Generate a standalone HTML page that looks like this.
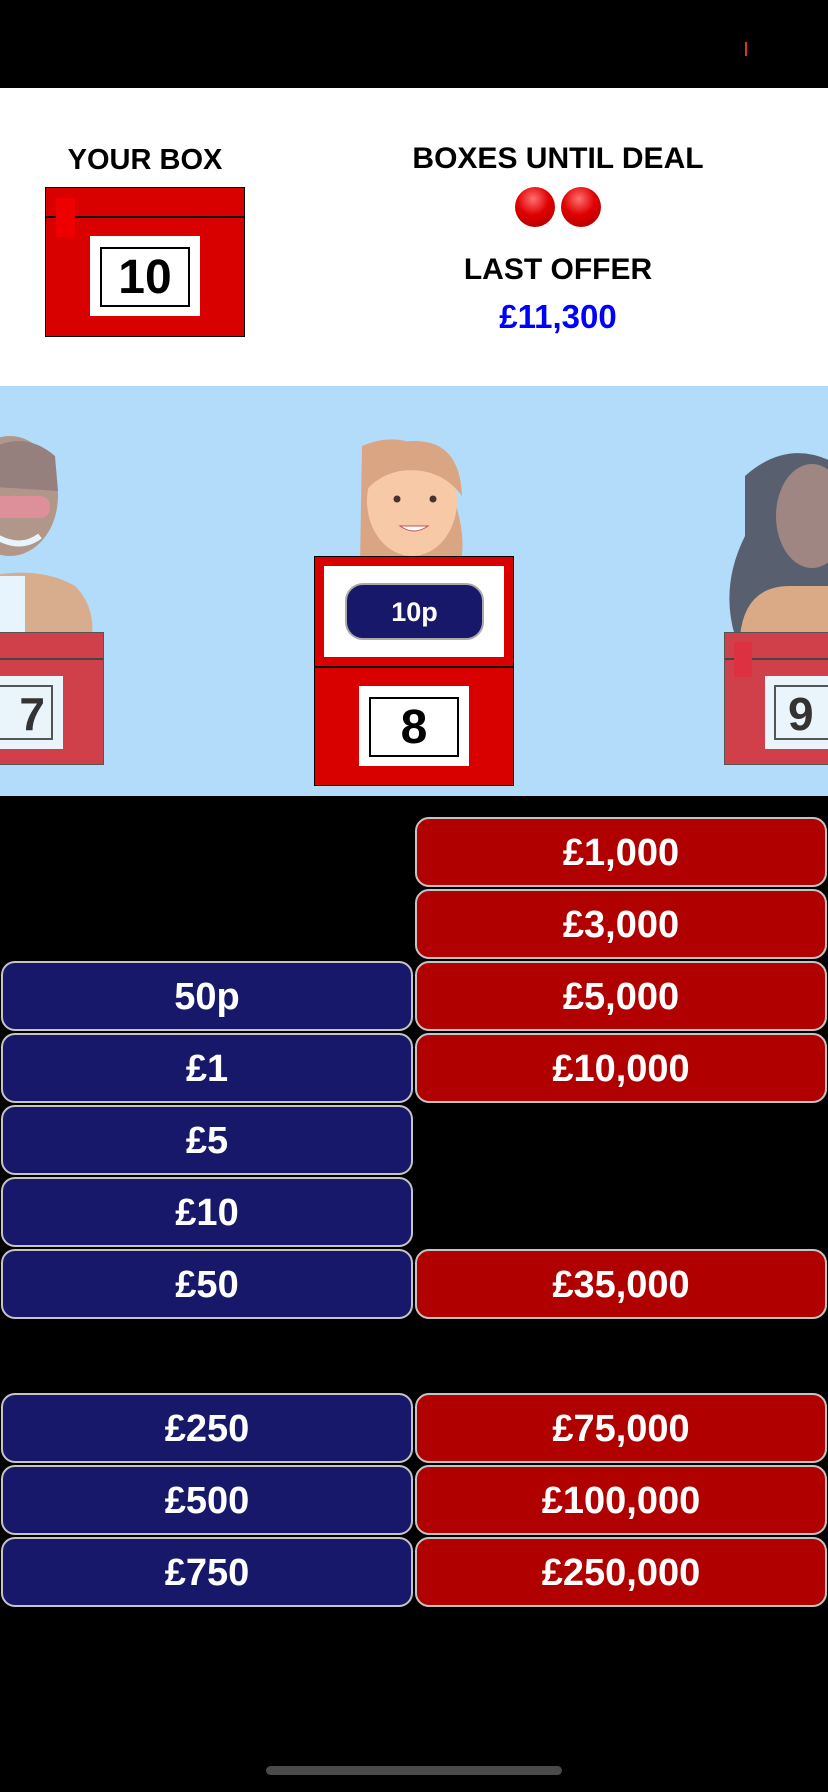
<!DOCTYPE html>
<html><head><meta charset="utf-8"><style>
*{margin:0;padding:0;box-sizing:border-box}
body{width:828px;height:1792px;background:#000;position:relative;overflow:hidden;font-family:"Liberation Sans",sans-serif;font-weight:bold}
.a{position:absolute}
.btn{position:absolute;height:70px;border:2px solid #c4c4c4;border-radius:14px;color:#fff;font-size:38px;text-align:center;line-height:68px}
.n{background:#18186b;left:1px;width:412px}
.r{background:#b00000;left:415px;width:412px}
</style></head><body>
<div class="a" style="left:745px;top:42px;width:2px;height:14px;background:#e03030"></div>
<div class="a" style="left:0;top:88px;width:828px;height:298px;background:#fff">
  <div class="a" style="left:45px;width:200px;top:56px;text-align:center;font-size:29px;color:#000">YOUR BOX</div>
  <div class="a" style="left:45px;top:99px;width:200px;height:150px;background:#d90000;border:1px solid #000">
    <div class="a" style="left:0;top:28px;width:198px;height:2px;background:#111"></div>
    <div class="a" style="left:10px;top:10px;width:19px;height:39px;background:#ee0000"></div>
    <div class="a" style="left:44px;top:48px;width:110px;height:80px;background:#fff">
      <div class="a" style="left:10px;top:11px;width:90px;height:60px;border:2px solid #000;text-align:center;font-size:48px;line-height:58px;color:#000">10</div>
    </div>
  </div>
  <div class="a" style="left:358px;width:400px;top:54px;text-align:center;font-size:30px;color:#000">BOXES UNTIL DEAL</div>
  <div class="a" style="left:515px;top:99px;width:40px;height:40px;border-radius:50%;background:radial-gradient(circle at 45% 30%,#ff7070,#e00000 45%,#a00000)"></div>
  <div class="a" style="left:561px;top:99px;width:40px;height:40px;border-radius:50%;background:radial-gradient(circle at 45% 30%,#ff7070,#e00000 45%,#a00000)"></div>
  <div class="a" style="left:358px;width:400px;top:165px;text-align:center;font-size:30px;color:#000">LAST OFFER</div>
  <div class="a" style="left:358px;width:400px;top:210px;text-align:center;font-size:33px;color:#0000ff">£11,300</div>
</div>
<div class="a" style="left:0;top:386px;width:828px;height:410px;background:#b3dcfb;overflow:hidden">
  <svg class="a" style="left:0;top:0" width="828" height="410">
    <g opacity="0.7">
      <path d="M-10 250 L-10 190 Q40 180 75 200 Q95 220 92 250Z" fill="#e89a60"/>
      <rect x="-5" y="190" width="30" height="60" fill="#fff"/>
      <ellipse cx="10" cy="110" rx="48" ry="60" fill="#b07a5a"/>
      <path d="M-20 70 Q20 40 55 70 L58 105 L-20 100Z" fill="#8a5a4a"/>
      <rect x="-10" y="110" width="60" height="22" rx="10" fill="#f07070"/>
      <path d="M-5 150 Q20 165 40 150" stroke="#fff" stroke-width="6" fill="none"/>
    </g>
    <path d="M362 60 Q410 40 440 80 Q470 140 460 180 L360 180 Z" fill="#d9a582"/>
    <ellipse cx="412" cy="115" rx="45" ry="55" fill="#f7c9a6"/>
    <path d="M362 110 Q365 55 415 55 Q460 55 462 110 Q440 80 400 85 Q375 90 362 110Z" fill="#d9a582"/>
    <circle cx="397" cy="113" r="3.5" fill="#4a3030"/><circle cx="433" cy="113" r="3.5" fill="#4a3030"/>
    <path d="M400 140 Q414 150 428 140 Z" fill="#fff" stroke="#c05050"/>
    <g opacity="0.75">
      <path d="M745 90 Q790 50 840 80 L840 250 L735 250 Q720 200 745 150Z" fill="#3a3640"/>
      <ellipse cx="812" cy="130" rx="36" ry="52" fill="#9a6a5a"/>
      <path d="M740 250 Q745 200 790 200 L840 200 L840 250Z" fill="#e89a60"/>
    </g>
  </svg>
  <div class="a" style="left:-2px;top:246px;width:106px;height:133px;background:#d0404a;border:1px solid #555">
    <div class="a" style="left:0;top:25px;width:104px;height:2px;background:#444"></div>
    <div class="a" style="left:-2px;top:43px;width:66px;height:73px;background:#eaf4fb">
      <div class="a" style="left:-4px;top:9px;width:60px;height:55px;border:2px solid #555;font-size:46px;line-height:54px;color:#333;text-align:right;padding-right:6px">7</div>
    </div>
  </div>
  <div class="a" style="left:724px;top:246px;width:110px;height:133px;background:#d0404a;border:1px solid #555">
    <div class="a" style="left:0;top:25px;width:110px;height:2px;background:#444"></div>
    <div class="a" style="left:9px;top:9px;width:18px;height:35px;background:#dd3040"></div>
    <div class="a" style="left:40px;top:43px;width:70px;height:73px;background:#eaf4fb">
      <div class="a" style="left:9px;top:9px;width:70px;height:55px;border:2px solid #555;font-size:46px;line-height:54px;color:#333;padding-left:12px">9</div>
    </div>
  </div>
  <div class="a" style="left:314px;top:170px;width:200px;height:230px;background:#d90000;border:1px solid #000">
    <div class="a" style="left:9px;top:9px;width:180px;height:91px;background:#fff">
      <div class="a" style="left:21px;top:17px;width:139px;height:57px;background:#18186b;border:2px solid #aaa;border-radius:18px;color:#fff;font-size:27px;text-align:center;line-height:55px">10p</div>
    </div>
    <div class="a" style="left:0;top:109px;width:198px;height:2px;background:#111"></div>
    <div class="a" style="left:44px;top:129px;width:110px;height:80px;background:#fff">
      <div class="a" style="left:10px;top:11px;width:90px;height:60px;border:2px solid #000;text-align:center;font-size:48px;line-height:58px;color:#000">8</div>
    </div>
  </div>
</div>
<div class="btn r" style="top:817px">£1,000</div>
<div class="btn r" style="top:889px">£3,000</div>
<div class="btn n" style="top:961px">50p</div><div class="btn r" style="top:961px">£5,000</div>
<div class="btn n" style="top:1033px">£1</div><div class="btn r" style="top:1033px">£10,000</div>
<div class="btn n" style="top:1105px">£5</div>
<div class="btn n" style="top:1177px">£10</div>
<div class="btn n" style="top:1249px">£50</div><div class="btn r" style="top:1249px">£35,000</div>
<div class="btn n" style="top:1393px">£250</div><div class="btn r" style="top:1393px">£75,000</div>
<div class="btn n" style="top:1465px">£500</div><div class="btn r" style="top:1465px">£100,000</div>
<div class="btn n" style="top:1537px">£750</div><div class="btn r" style="top:1537px">£250,000</div>
<div class="a" style="left:266px;top:1766px;width:296px;height:9px;border-radius:5px;background:#4a4a4a"></div>
</body></html>
